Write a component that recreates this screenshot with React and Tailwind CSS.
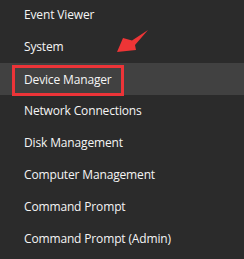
const items = [
  "Event Viewer",
  "System",
  "Device Manager",
  "Network Connections",
  "Disk Management",
  "Computer Management",
  "Command Prompt",
  "Command Prompt (Admin)",
];

export default function App() {
  return (
    <div
      className="relative w-[244px] h-[259px] overflow-hidden bg-[#2b2b2b]"
      style={{ fontFamily: '"Open Sans", "Noto Sans", sans-serif' }}
    >
      <div className="flex flex-col -mt-[1px]">
        {items.map((label) => (
          <div
            key={label}
            className={`h-8 flex items-center pl-6 text-[12px] tracking-[-0.15px] text-[#f5f5f5] ${
              label === "Device Manager" ? "bg-[#414141]" : ""
            }`}
          >
            {label === "Device Manager" ? (
              <span className="-ml-3 mt-[2px] h-[31px] w-[112px] border-[3px] border-[#ec3438] flex items-center pl-[9px]">
                {label}
              </span>
            ) : (
              label
            )}
          </div>
        ))}
      </div>

      {/* red arrow pointing at Device Manager */}
      <svg
        className="absolute left-0 top-0"
        width="244"
        height="259"
        viewBox="0 0 244 259"
      >
        <polygon
          points="117,52 123,38 132,40.5 148,30 135,45 136,50"
          fill="#ee3536"
        />
      </svg>
    </div>
  );
}
